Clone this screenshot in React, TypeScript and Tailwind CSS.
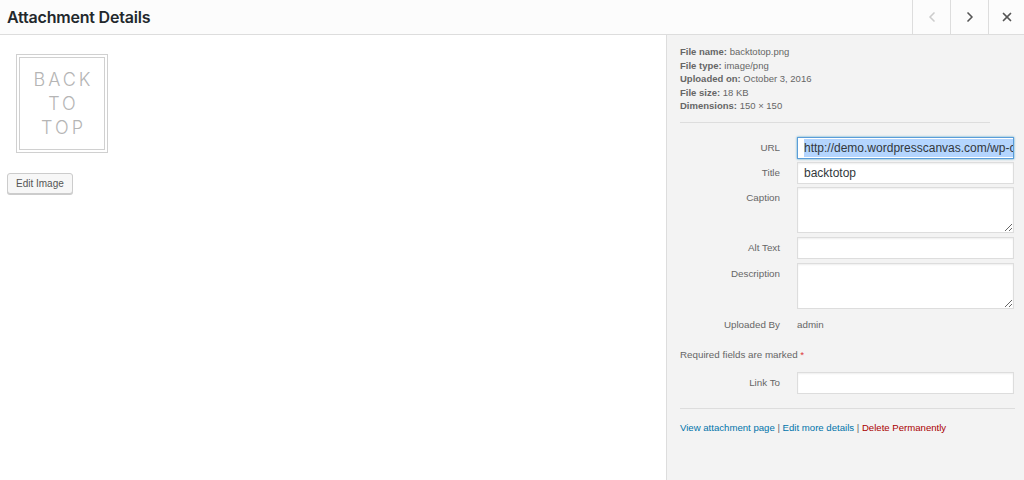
import { ChevronLeft, ChevronRight, X } from "lucide-react";

const font = { fontFamily: "'Liberation Sans', Arial, sans-serif" };

const meta = [
  ["File name:", "backtotop.png"],
  ["File type:", "image/png"],
  ["Uploaded on:", "October 3, 2016"],
  ["File size:", "18 KB"],
  ["Dimensions:", "150 × 150"],
];

const Label = ({ children }: { children: React.ReactNode }) => (
  <div className="w-[100px] shrink-0 pt-[4px] text-right text-[9.8px] leading-[14px] text-[#666]">
    {children}
  </div>
);

const Field = ({ label, children }: { label: string; children: React.ReactNode }) => (
  <div className="flex gap-[17px]">
    <Label>{label}</Label>
    {children}
  </div>
);

const inputBox =
  "h-[22px] w-[218px] border border-[#ddd] bg-white shadow-[inset_0_1px_2px_rgba(0,0,0,0.07)]";

const AttachmentDetails = () => {
  return (
    <div className="flex h-[480px] w-full flex-col bg-white" style={font}>
      <header className="flex h-[35px] shrink-0 items-stretch border-b border-[#ddd] bg-[#fcfcfc]">
        <h1
          className="flex flex-1 items-center pl-[7px] text-[16px] font-semibold tracking-[-0.2px] text-[#23282d]"
          style={{ fontFamily: "Inter, 'Liberation Sans', sans-serif" }}
        >
          Attachment Details
        </h1>
        <button className="flex w-[38px] items-center justify-center border-l border-[#ddd] text-[#ccc]">
          <ChevronLeft size={16} strokeWidth={2.5} />
        </button>
        <button className="flex w-[38px] items-center justify-center border-l border-[#ddd] text-[#555]">
          <ChevronRight size={16} strokeWidth={2.5} />
        </button>
        <button className="flex w-[36px] items-center justify-center border-l border-[#ddd] text-[#555]">
          <X size={14} strokeWidth={3} />
        </button>
      </header>

      <div className="flex flex-1">
        <main className="flex-1 bg-white pl-[7px] pt-[19px]">
          <div className="ml-[9px] flex h-[99px] w-[92px] border border-[#d0d0d0] p-[2px]">
            <div
              className="flex flex-1 flex-col items-center justify-center border border-[#d0d0d0] pl-[3px] text-[18px] font-light leading-[24px] tracking-[3px] text-[#b5b5b5]"
              style={{ fontFamily: "Inter, 'Liberation Sans', sans-serif" }}
            >
              <span>BACK</span>
              <span>TO</span>
              <span>TOP</span>
            </div>
          </div>
          <button className="mt-[20px] h-[21px] rounded-[3px] border border-[#ccc] bg-[#f7f7f7] px-[8px] text-[10px] text-[#555] shadow-[0_1px_0_#ccc]">
            Edit Image
          </button>
        </main>

        <aside className="w-[358px] shrink-0 border-l border-[#ddd] bg-[#f3f3f3] pl-[13px] pr-[10px] pt-[10px]">
          <div className="text-[9.5px] leading-[13.6px] text-[#666]">
            {meta.map(([k, v]) => (
              <div key={k}>
                <span className="font-bold">{k}</span> {v}
              </div>
            ))}
          </div>
          <div className="mt-[9px] w-[310px] border-t border-[#ddd]" />

          <div className="mt-[14px] flex flex-col gap-[3px]">
            <Field label="URL">
              <div className="flex h-[22px] w-[218px] items-center overflow-hidden whitespace-nowrap border border-[#5b9dd9] bg-white pl-[6px] text-[12px] text-[#32373c] shadow-[0_0_2px_rgba(30,140,190,0.8)]">
                <span className="bg-[#b4d5fe]">http://demo.wordpresscanvas.com/wp-content/uploads/2016/10/backtotop.png</span>
              </div>
            </Field>
            <Field label="Title">
              <div className={`${inputBox} flex items-center pl-[6px] text-[12px] text-[#32373c]`}>backtotop</div>
            </Field>
            <Field label="Caption">
              <textarea readOnly className={`${inputBox} h-[46px] outline-none`} />
            </Field>
            <div className="mt-[1px]">
              <Field label="Alt Text">
                <div className={`${inputBox} h-[21px]`} />
              </Field>
            </div>
            <div className="mt-[1px]">
              <Field label="Description">
                <textarea readOnly className={`${inputBox} h-[46px] outline-none`} />
              </Field>
            </div>
            <div className="mt-[2px] flex gap-[17px]">
              <Label>Uploaded By</Label>
              <div className="pt-[4px] text-[9.8px] leading-[14px] text-[#666]">admin</div>
            </div>
          </div>

          <p className="mt-[16px] text-[9.8px] leading-[14px] text-[#666]">
            Required fields are marked <span className="text-[#dc3232]">*</span>
          </p>

          <div className="mt-[10px]">
            <Field label="Link To">
              <div className={inputBox} />
            </Field>
          </div>

          <div className="mt-[14px] w-[335px] border-t border-[#ddd]" />

          <div className="mt-[12px] text-[9.6px] leading-[14px] text-[#666]">
            <a className="text-[#0073aa]">View attachment page</a> |{" "}
            <a className="text-[#0073aa]">Edit more details</a> |{" "}
            <a className="text-[#a00]">Delete Permanently</a>
          </div>
        </aside>
      </div>
    </div>
  );
};

export default AttachmentDetails;
